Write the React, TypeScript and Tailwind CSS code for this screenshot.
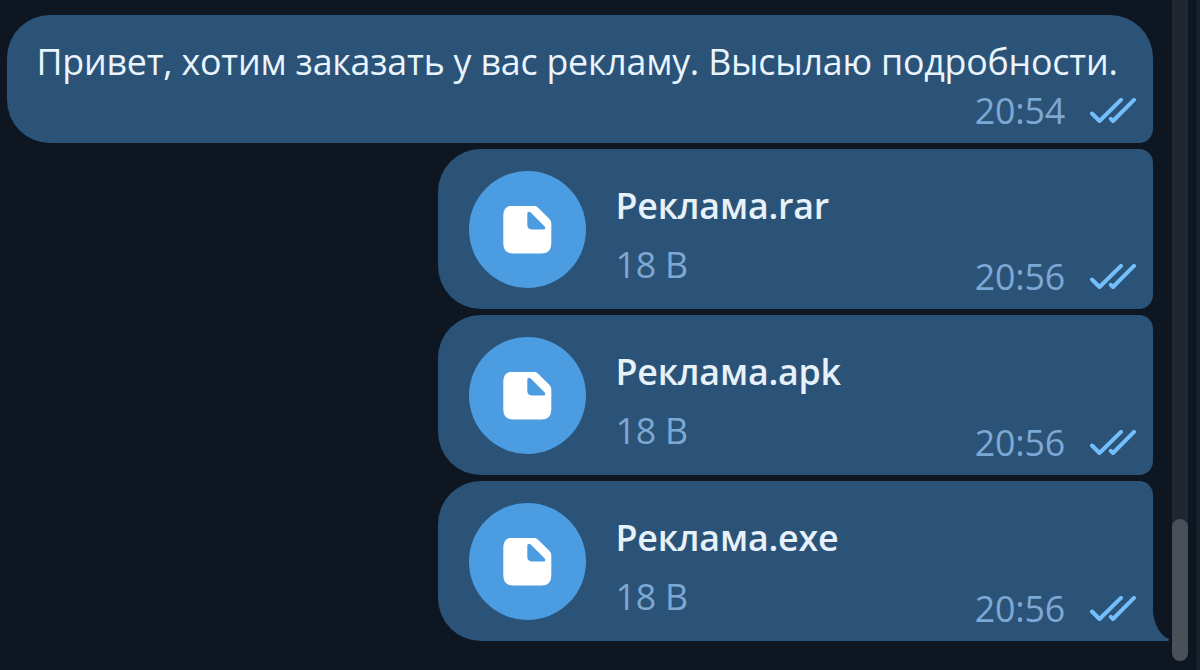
interface FileMessage {
    name: string
    size: string
    time: string
}

const files: FileMessage[] = [
    { name: "Реклама.rar", size: "18 B", time: "20:56" },
    { name: "Реклама.apk", size: "18 B", time: "20:56" },
    { name: "Реклама.exe", size: "18 B", time: "20:56" },
]

function ReadTicks() {
    return (
        <svg width="48" height="26" viewBox="0 0 48 26" fill="none" stroke="#74bffb" strokeWidth="4" strokeLinecap="round" strokeLinejoin="round">
            <path d="M4 15.5L11.5 23L33 1.9" />
            <path d="M22.8 20.8L25 23L46 1.9" />
        </svg>
    )
}

function MessageStatus({ time }: { time: string }) {
    return (
        <div className="flex shrink-0 items-center gap-[22.5px] self-end leading-[49px] text-[#7da8d3]">
            <span>{time}</span>
            <ReadTicks />
        </div>
    )
}

function FileIcon() {
    return (
        <div className="flex size-[117px] shrink-0 items-center justify-center rounded-full bg-[#4c9ce2]">
            <svg width="49" height="48" viewBox="-0.3 0.5 49 48">
                <path
                    fill="#fff"
                    fillRule="evenodd"
                    d="M10 0H29.5Q32.5 0 34.6 2L46 13.2Q48 15.2 48 18V38Q48 48 38 48H10Q0 48 0 38V10Q0 0 10 0ZM24 8.5V19Q24 24 29 24H40C42 24 42.6 22.2 41.2 20.8L27.4 7C26 5.6 24 6.4 24 8.5Z"
                />
            </svg>
        </div>
    )
}

function FileBubble({ file, last }: { file: FileMessage; last: boolean }) {
    return (
        <div
            className={`relative flex h-40 w-[715px] rounded-l-[43px] rounded-tr-[14px] bg-[#2b5378] pl-[31px] pr-[17px] ${last ? "" : "rounded-br-[14px]"}`}
        >
            <div className="pt-[22px]">
                <FileIcon />
            </div>
            <div className="ml-[30px] flex-1 pt-8">
                <div className="font-semibold leading-[49px] text-[#e6f1fa]">{file.name}</div>
                <div className="mt-[10px] leading-[49px] text-[#7da8d3]">{file.size}</div>
            </div>
            <div className="flex pb-[8px]">
                <MessageStatus time={file.time} />
            </div>
            {last && (
                <svg className="absolute bottom-0 left-full" width="17" height="28" viewBox="0 0 17 28">
                    <path fill="#2b5378" d="M0 0C2 13 7 22 15 25.5C16.5 26.3 16.3 28 14.5 28H0Z" />
                </svg>
            )}
        </div>
    )
}

export default function App() {
    return (
        <div className="flex h-[670px] w-[1200px] overflow-hidden bg-[#0e1621] font-['Open_Sans','Noto_Sans',sans-serif] text-[35.75px] tracking-[-0.2px]">
            <main className="flex w-[1172px] flex-col items-end gap-1.5 pr-[19.5px] pt-[15px]">
                <div className="flex h-32 w-[1145.5px] flex-col rounded-l-[43px] rounded-tr-[43px] rounded-br-[14px] bg-[#2b5378] pl-[29.5px] pr-[17px] pt-[22px]">
                    <p className="whitespace-nowrap leading-[49px] text-[#e9f4fd]">
                        Привет, хотим заказать у вас рекламу. Высылаю подробности.
                    </p>
                    <MessageStatus time="20:54" />
                </div>
                {files.map((file, i) => (
                    <FileBubble key={file.name} file={file} last={i === files.length - 1} />
                ))}
            </main>
            <div className="flex w-4 flex-col bg-[#202731]">
                <div className="h-[519px]" />
                <div className="bg-[linear-gradient(#202731_50%,#0e1621_50%)]">
                    <div className="h-[142px] rounded-full bg-[#4a5058]" />
                </div>
                <div className="flex-1 bg-[#0e1621]" />
            </div>
            <div className="ml-[7px] flex-1 border-l border-[#08101a] bg-[#16212b]" />
        </div>
    )
}
